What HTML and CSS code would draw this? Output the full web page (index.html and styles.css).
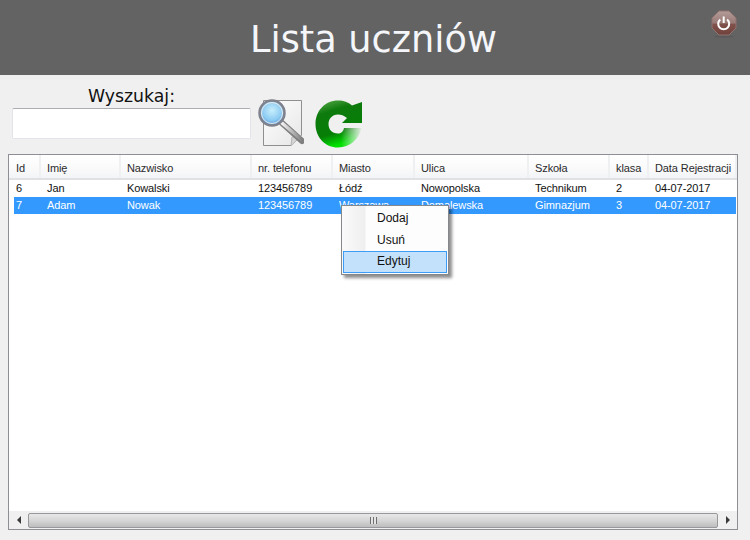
FILE: index.html
```html
<!DOCTYPE html>
<html lang="pl">
<head>
    <meta charset="UTF-8">
    <title>Lista uczniów</title>
    <link rel="stylesheet" href="styles.css">
</head>
<body>
    <header class="top">
        <h1>Lista uczniów</h1>
        <button class="power" type="button" aria-label="Zamknij">
            <svg width="26" height="28" viewBox="0 0 26 28">
                <defs>
                    <linearGradient id="octa" x1="0" y1="0" x2="0" y2="1">
                        <stop offset="0" stop-color="#b39c99"/>
                        <stop offset="0.5" stop-color="#997a76"/>
                        <stop offset="0.55" stop-color="#80524b"/>
                        <stop offset="1" stop-color="#70423b"/>
                    </linearGradient>
                </defs>
                <ellipse cx="13" cy="26.500" rx="10" ry="1.200" fill="#5a5a5a"/>
                <polygon points="8,1 18,1 25,8 25,18 18,25 8,25 1,18 1,8" fill="url(#octa)" stroke="#8f7370"/>
                <path d="M9.300 9.500a5.500 5.500 0 1 0 6.800 0" fill="none" stroke="#fff" stroke-width="2"/>
                <path d="M12.700 6.500v6.500" stroke="#fff" stroke-width="2"/>
            </svg>
        </button>
    </header>

    <section class="tools">
        <div class="search">
            <label for="szukaj">Wyszukaj:</label>
            <input type="text" id="szukaj">
        </div>
        <svg class="icon-search" width="46" height="50" viewBox="0 0 46 50">
            <defs>
                <radialGradient id="lens" cx="0.5" cy="0.4" r="0.65">
                    <stop offset="0" stop-color="#c8eefc"/>
                    <stop offset="0.6" stop-color="#8ccbf3"/>
                    <stop offset="1" stop-color="#3f86d2"/>
                </radialGradient>
                <linearGradient id="paper" x1="0" y1="0" x2="1" y2="1">
                    <stop offset="0" stop-color="#ffffff"/>
                    <stop offset="1" stop-color="#e6e6e6"/>
                </linearGradient>
                <linearGradient id="handle" x1="0" y1="0" x2="1" y2="0">
                    <stop offset="0" stop-color="#f2f2f2"/>
                    <stop offset="1" stop-color="#808080"/>
                </linearGradient>
            </defs>
            <path d="M5.500 1.500H43.500V36.500L33 46.500H5.500Z" fill="url(#paper)" stroke="#8f8f8f"/>
            <path d="M33 46.500L34 38L43.500 36.500" fill="#d4d4d4" stroke="#b5b5b5"/>
            <path d="M24 24L44 42" stroke="#7f7f7f" stroke-width="6" stroke-linecap="round"/>
            <path d="M24 24L44 41" stroke="url(#handle)" stroke-width="3.500" stroke-linecap="round"/>
            <circle cx="14" cy="14" r="12.500" fill="url(#lens)" stroke="#7f828c" stroke-width="2.500"/>
            <circle cx="14" cy="14" r="10.500" fill="none" stroke="#e8e8e8"/>
        </svg>
        <svg class="icon-refresh" width="48" height="48" viewBox="0 0 48 48">
            <defs>
                <linearGradient id="ring" x1="0" y1="0" x2="0.3" y2="1">
                    <stop offset="0" stop-color="#5fae4f"/>
                    <stop offset="0.3" stop-color="#0d7a0d"/>
                    <stop offset="0.75" stop-color="#067f06"/>
                    <stop offset="1" stop-color="#00e000"/>
                </linearGradient>
                <linearGradient id="fade" x1="0" y1="0" x2="1" y2="0">
                    <stop offset="0" stop-color="#f0f0f0" stop-opacity="0"/>
                    <stop offset="1" stop-color="#f0f0f0"/>
                </linearGradient>
            </defs>
            <path d="M23 0.500C29 0.500 33 2 37 5.500L47 2V23H27L32 18C29 15.500 26 14.500 23 14.500C17 14.500 13.500 19 13.500 24C13.500 29.500 17 33.500 23 33.500C26 33.500 28 32 29 28H46.500C44 39 35 47.500 23 47.500C10 47.500 0.500 37 0.500 24C0.500 11 10 0.500 23 0.500Z" fill="url(#ring)"/>
            <path d="M26 27.500H47.500V48H26Z" fill="url(#fade)"/>
        </svg>
    </section>

    <main class="grid">
        <div class="row head">
            <div>Id</div><div>Imię</div><div>Nazwisko</div><div>nr. telefonu</div><div>Miasto</div><div>Ulica</div><div>Szkoła</div><div>klasa</div><div>Data Rejestracji</div>
        </div>
        <div class="row">
            <div>6</div><div>Jan</div><div>Kowalski</div><div>123456789</div><div>Łódź</div><div>Nowopolska</div><div>Technikum</div><div>2</div><div>04-07-2017</div>
        </div>
        <div class="row selected">
            <div>7</div><div>Adam</div><div>Nowak</div><div>123456789</div><div>Warszawa</div><div>Domalewska</div><div>Gimnazjum</div><div>3</div><div>04-07-2017</div>
        </div>

        <div class="menu">
            <div class="menu-item">Dodaj</div>
            <div class="menu-item">Usuń</div>
            <div class="menu-item active">Edytuj</div>
        </div>

        <div class="scrollbar">
            <span class="arrow left"></span>
            <div class="thumb"><span class="grip"></span></div>
            <span class="arrow right"></span>
        </div>
    </main>
</body>
</html>
```
FILE: styles.css
```css
* {
    box-sizing: border-box;
}
html, body {
    margin: 0;
    height: 540px;
    overflow: hidden;
}
body {
    display: flex;
    flex-direction: column;
    background-color: #f0f0f0;
    font-family: "Liberation Sans", Arial, sans-serif;
}
.top {
    position: relative;
    height: 75px;
    flex: none;
    display: flex;
    justify-content: center;
    align-items: center;
    background-color: #636363;
}
.top h1 {
    margin: 4px 3px 0 0;
    font-family: "DejaVu Sans", Verdana, sans-serif;
    font-size: 36.7px;
    font-weight: normal;
    color: #f4f6fa;
}
.power {
    position: absolute;
    top: 10px;
    right: 13px;
    padding: 0;
    border: none;
    background: none;
    line-height: 0;
}
.tools {
    height: 79px;
    flex: none;
    display: flex;
    align-items: flex-start;
    padding-left: 12px;
}
.search {
    width: 239px;
    text-align: center;
}
.search label {
    display: block;
    height: 22px;
    margin-top: 11px;
    font-family: "DejaVu Sans", Verdana, sans-serif;
    font-size: 17.3px;
    line-height: 20px;
    color: #111;
}
.search input {
    display: block;
    width: 239px;
    height: 31px;
    background: #fff;
    border: 1px solid #e3e3ea;
    border-top-color: #acadb3;
    border-radius: 2px;
}
.icon-search {
    margin: 24px 0 0 7px;
}
.icon-refresh {
    margin: 25px 0 0 11px;
}
.grid {
    position: relative;
    height: 376px;
    margin: 0 12px 0 8px;
    padding-left: 5px;
    padding-right: 1px;
    background-color: #fff;
    border: 1px solid #8e8f95;
    font-size: 11px;
    letter-spacing: -0.1px;
}
.row {
    display: grid;
    grid-template-columns: 27px 80px 131px 81px 82px 114px 81px 39px 88px;
    height: 17px;
    line-height: 17px;
    color: #111;
}
.row > div {
    padding-left: 6px;
    white-space: nowrap;
    overflow: hidden;
}
.row > div:first-child {
    padding-left: 2px;
}
.head {
    height: 25px;
    margin-left: -5px;
    margin-right: -1px;
    padding-left: 5px;
    line-height: 26px;
    background: linear-gradient(#ffffff, #fbfbfc 50%, #f3f4f6);
    border-bottom: 2px solid #dfe1e4;
}
.head > div {
    border-right: 2px solid #eff0f2;
    color: #2b2b2b;
}
.selected {
    background-color: #3399ff;
    color: #fff;
}
.menu {
    position: absolute;
    left: 332px;
    top: 50px;
    width: 108px;
    height: 70px;
    padding: 1px;
    background: linear-gradient(90deg, #fafafa, #efefef 23px, #fdfdfd 24px);
    border: 1px solid #86878b;
    box-shadow: 3px 3px 3px rgba(0, 0, 0, 0.45);
    font-size: 12px;
    letter-spacing: 0;
}
.menu-item {
    height: 22px;
    padding-left: 34px;
    line-height: 22px;
    color: #111;
}
.active {
    background-color: #c4e1fb;
    border: 1px solid #3d9cf5;
    padding-left: 33px;
    line-height: 19px;
}
.scrollbar {
    position: absolute;
    left: 0;
    right: 0;
    bottom: 0;
    height: 18px;
    display: flex;
    align-items: center;
    background-color: #f0f0f0;
}
.arrow {
    width: 19px;
    flex: none;
    display: flex;
    justify-content: center;
}
.arrow::before {
    content: "";
    border-top: 4px solid transparent;
    border-bottom: 4px solid transparent;
}
.left::before {
    border-right: 4px solid #3a3a3a;
}
.right::before {
    border-left: 4px solid #3a3a3a;
}
.thumb {
    flex: 1;
    height: 15px;
    display: flex;
    justify-content: center;
    align-items: center;
    background: linear-gradient(#e8e8e8, #d8d8d8 45%, #bdbdbd);
    border: 1px solid #97989c;
    border-radius: 2px;
}
.grip {
    width: 7px;
    height: 7px;
    background: repeating-linear-gradient(90deg, #6e6e6e 0 1px, #e4e4e4 1px 3px);
}
```
